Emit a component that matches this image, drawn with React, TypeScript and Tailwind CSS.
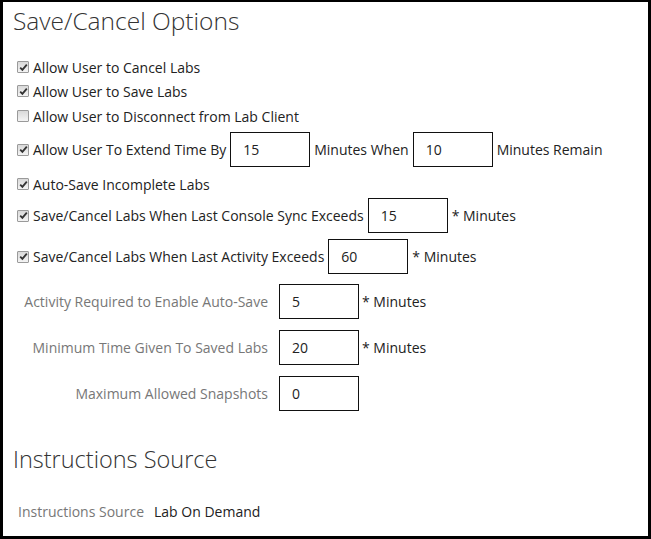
import React from "react";

const Check = ({ checked }: { checked: boolean }) => (
  <span className="inline-flex w-[12px] h-[12px] shrink-0 items-center justify-center border border-[#9a9a9a] rounded-[1px] bg-gradient-to-b from-[#d9d9d9] to-[#f4f4f4] mr-[4px]">
    {checked && (
      <svg width="9" height="9" viewBox="0 0 9 9">
        <path d="M1.2 4.6 L3.4 6.9 L7.8 1.6" stroke="#333" strokeWidth="1.8" fill="none" />
      </svg>
    )}
  </span>
);

const Box = ({ v }: { v: string }) => (
  <div className="w-[80px] h-[35px] border border-[#111] flex items-center pl-[12px] text-[#222] shrink-0">{v}</div>
);

export default function App() {
  return (
    <div
      className="w-[651px] h-[539px] border-l-[3px] border-t-[2px] border-r-[3px] border-b-[3px] border-black bg-white text-[14px] text-[#222] overflow-hidden"
      style={{ fontFamily: '"Open Sans", "Noto Sans", sans-serif' }}
    >
      <div className="pl-[10px] pt-[3px] h-[32px] text-[24.5px] font-light text-[#333] leading-[32px]">Save/Cancel Options</div>
      <div className="pl-[14px] pt-[21px] flex flex-col">
        <div className="h-[24px] flex items-center"><Check checked />Allow User to Cancel Labs</div>
        <div className="h-[24px] mt-[0px] flex items-center"><Check checked />Allow User to Save Labs</div>
        <div className="h-[24px] mt-[1px] flex items-center"><Check checked={false} />Allow User to Disconnect from Lab Client</div>
        <div className="h-[35px] mt-[4px] flex items-center gap-[4px]">
          <span className="flex items-center"><Check checked />Allow User To Extend Time By</span>
          <Box v="15" />
          <span>Minutes When</span>
          <Box v="10" />
          <span>Minutes Remain</span>
        </div>
        <div className="h-[24px] mt-[5px] flex items-center"><Check checked />Auto-Save Incomplete Labs</div>
        <div className="h-[35px] mt-[2px] flex items-center gap-[4px]">
          <span className="flex items-center"><Check checked />Save/Cancel Labs When Last Console Sync Exceeds</span>
          <Box v="15" />
          <span>* Minutes</span>
        </div>
        <div className="h-[35px] mt-[6px] flex items-center gap-[4px]">
          <span className="flex items-center"><Check checked />Save/Cancel Labs When Last Activity Exceeds</span>
          <Box v="60" />
          <span>* Minutes</span>
        </div>
      </div>
      <div className="flex flex-col gap-[11px] mt-[10px]">
        {[
          ["Activity Required to Enable Auto-Save", "5", true],
          ["Minimum Time Given To Saved Labs", "20", true],
          ["Maximum Allowed Snapshots", "0", false],
        ].map(([l, v, m]) => (
          <div key={l as string} className="h-[35px] flex items-center">
            <span className="w-[276px] text-right text-[#777] pr-[11px]">{l}</span>
            <Box v={v as string} />
            {m && <span className="ml-[3px]">* Minutes</span>}
          </div>
        ))}
      </div>
      <div className="pl-[10px] mt-[32px] h-[32px] text-[23.5px] font-light text-[#333] leading-[32px]">Instructions Source</div>
      <div className="pl-[15px] mt-[24px] h-[24px] flex items-center">
        <span className="text-[#777] w-[136px]">Instructions Source</span>
        <span className="text-[#222]">Lab On Demand</span>
      </div>
    </div>
  );
}
